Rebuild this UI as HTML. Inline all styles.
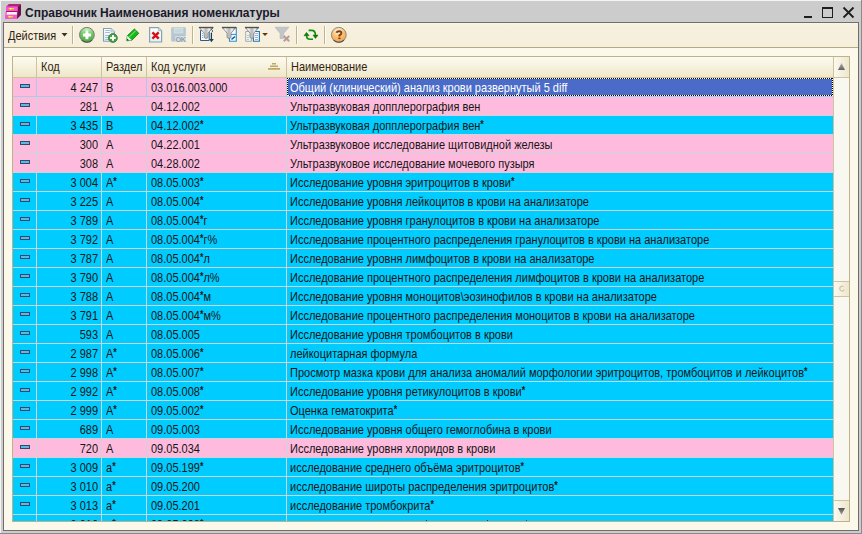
<!DOCTYPE html>
<html><head><meta charset="utf-8">
<style>
html,body{margin:0;padding:0;width:862px;height:534px;overflow:hidden;position:relative;background:#cccccc;font-family:"Liberation Sans",sans-serif;font-size:11px;color:#000}
.a{position:absolute}
#title{left:25px;top:6px;font-size:12px;font-weight:bold;color:#1a1a2a;line-height:15px;white-space:nowrap}
#frame{left:3px;top:22px;width:854px;height:507px;border:1px solid #6e6e6e;background:#fdf9ea}
#tb{left:4px;top:23px;width:854px;height:24px;background:linear-gradient(#fbf6e6 0,#f7f0de 2px,#f6efdc);border-bottom:1px solid #b4a982}
#tbl{left:12px;top:56px;width:836px;height:464px;border:1px solid #bdb28c;background:#cdd3d6;overflow:hidden}
#hdr{left:0;top:0;width:820px;height:20px;background:linear-gradient(#fdfbf1,#efe7c9)}
.hl{position:absolute;top:0;height:20px;width:1px;background:#cdc3a0}
.ht{position:absolute;top:0;line-height:20px;white-space:nowrap;color:#302410;font-size:11px;transform:scaleY(1.13);transform-origin:0 14px}
.r{position:absolute;left:0;width:820px;height:18px}
.r span{position:absolute;top:1px;line-height:18px;white-space:nowrap;font-size:11px;color:#161616;transform:scaleY(1.13);transform-origin:0 12px}
.r .k{right:735px;text-align:right}
.r .z{left:93px}
.r .u{left:138px}
.r .n{left:277px}
.r .sel{position:absolute;left:274px;top:0;width:546px;height:18px;background:#4a6cc8;overflow:hidden}
.r .sel span{left:3px;color:#fff}
.mi{position:absolute;left:7px;top:6px;width:8px;height:2px;border:1px solid #2b4a6c;background:#5cb8e2}
.vl{position:absolute;top:21px;width:1px;height:450px;background:#cdd3d6}
.dh{height:1px;background:repeating-linear-gradient(90deg,#000 0 1px,#fff 1px 2px)}
.dv{width:1px;background:repeating-linear-gradient(180deg,#000 0 1px,#fff 1px 2px)}
.as{font-weight:bold;font-size:9px;letter-spacing:0;position:relative;top:-2px;margin-left:0}
#sb{left:820px;top:0;width:15px;height:464px;background:#f8f7f0;border-left:1px solid #cdc3a0}
</style></head><body>
<div class="a" style="left:0;top:0;width:862px;height:1px;background:#f4f4f4"></div>
<div class="a" style="left:0;top:0;width:1px;height:534px;background:#f4f4f4"></div>
<div class="a" style="left:861px;top:0;width:1px;height:534px;background:#8a8a8a"></div>
<div class="a" style="left:0;top:533px;width:862px;height:1px;background:#8a8a8a"></div>

<!-- title icon -->
<svg class="a" style="left:0;top:0" width="24" height="22" viewBox="0 0 24 22">
  <polygon points="9,4 21,4 17.5,6.8 6,6.8" fill="#b3217e"/>
  <polygon points="17.5,6.8 21,4 21,15 17,19" fill="#6e0f4e"/>
  <rect x="6" y="6.8" width="11.5" height="4.4" fill="#ff4fd2"/>
  <rect x="6" y="11" width="11.5" height="1" fill="#9a1a6a"/>
  <polygon points="5,12 7,12 7,14.7 5,14.7" fill="#ff7ad8"/>
  <rect x="7" y="12" width="9.5" height="2.7" fill="#f4f8f2"/>
  <rect x="5" y="14.7" width="12" height="4.3" fill="#ff4fd2"/>
  <rect x="8.7" y="8" width="5.3" height="1.4" fill="#ecdc00"/>
  <rect x="8" y="15.9" width="5" height="1.5" fill="#ecdc00"/>
  <rect x="10" y="8" width="1.2" height="1.4" fill="#fff8c0"/>
  <rect x="9.3" y="15.9" width="1.2" height="1.5" fill="#fff8c0"/>
</svg>
<div id="title" class="a">Справочник Наименования номенклатуры</div>
<!-- window buttons -->
<div class="a" style="left:804px;top:16px;width:8px;height:2px;background:#1e1e1e"></div>
<div class="a" style="left:822px;top:7px;width:9px;height:8px;border:1px solid #1e1e1e;border-top-width:2px"></div>
<svg class="a" style="left:842px;top:6px" width="13" height="13" viewBox="0 0 13 13"><path d="M1.5 1.5L11.5 11.5M11.5 1.5L1.5 11.5" stroke="#1e1e1e" stroke-width="1.8"/></svg>

<div id="frame" class="a"></div>
<div id="tb" class="a"></div>
<div class="a" style="left:8px;top:28px;line-height:16px;color:#302410;font-size:11px;transform:scaleY(1.13);transform-origin:0 12px">Действия</div>
<svg class="a" style="left:61px;top:33px" width="7" height="4"><polygon points="0.5,0 6.5,0 3.5,3.5" fill="#3a3020"/></svg>
<div class="a" style="left:72px;top:26px;width:1px;height:18px;background:#bfb38c"></div><div class="a" style="left:73px;top:26px;width:1px;height:18px;background:#fffdf6"></div>
<div class="a" style="left:192px;top:26px;width:1px;height:18px;background:#bfb38c"></div><div class="a" style="left:193px;top:26px;width:1px;height:18px;background:#fffdf6"></div>
<div class="a" style="left:296px;top:26px;width:1px;height:18px;background:#bfb38c"></div><div class="a" style="left:297px;top:26px;width:1px;height:18px;background:#fffdf6"></div>
<div class="a" style="left:324px;top:26px;width:1px;height:18px;background:#bfb38c"></div><div class="a" style="left:325px;top:26px;width:1px;height:18px;background:#fffdf6"></div>

<!-- toolbar icons -->
<svg class="a" style="left:0;top:0;overflow:visible" width="862" height="50" viewBox="0 0 862 50">
  <defs>
    <radialGradient id="g1" cx="0.5" cy="0.2" r="0.8"><stop offset="0" stop-color="#d4f2cc"/><stop offset="0.5" stop-color="#78cc6e"/><stop offset="1" stop-color="#44a63c"/></radialGradient>
    <radialGradient id="g1b" cx="0.5" cy="0.5" r="0.5"><stop offset="0" stop-color="#0a8a1a"/><stop offset="1" stop-color="#58b850"/></radialGradient>
    <radialGradient id="g2" cx="0.45" cy="0.25" r="0.8"><stop offset="0" stop-color="#fff4e4"/><stop offset="0.5" stop-color="#fcc070"/><stop offset="1" stop-color="#f4a040"/></radialGradient>
    <linearGradient id="fg" x1="0" x2="1"><stop offset="0" stop-color="#8a8a8a"/><stop offset="0.2" stop-color="#fafafa"/><stop offset="0.5" stop-color="#b4b4b4"/><stop offset="0.72" stop-color="#f4f4f4"/><stop offset="1" stop-color="#6a6a6a"/></linearGradient>
    <linearGradient id="pg" x1="0" y1="0" x2="0" y2="1"><stop offset="0" stop-color="#ffffff"/><stop offset="1" stop-color="#dff0f8"/></linearGradient>
  </defs>
  <!-- add -->
  <circle cx="86.9" cy="34.8" r="7.4" fill="url(#g1)" stroke="#7a8478" stroke-width="1"/>
  <path d="M81.67 40.03A7.4 7.4 0 0 0 92.13 40.03" stroke="#4a524a" stroke-width="1.1" fill="none"/>
  <path d="M83 35H91M87 31V39.2" stroke="#2a9a30" stroke-width="4.4" opacity="0.55"/>
  <rect x="83" y="33.4" width="8" height="3.2" fill="#fff"/><rect x="85.4" y="31" width="3.1" height="8.2" fill="#fff"/>
  <!-- copy -->
  <path d="M103.5 28.5H111L114.5 32V41.3H103.5Z" fill="url(#pg)" stroke="#7ca2bc" stroke-width="1.1"/>
  <path d="M111 28.5V32H114.5" fill="#d8e8f0" stroke="#9ab8cc" stroke-width="0.8"/>
  <path d="M105.2 30.5H110M105.2 32.5H110M105.2 35.5H109M105.2 37.5H109M105.2 39.5H109" stroke="#a6b2bc" stroke-width="0.9"/>
  <circle cx="112.9" cy="38" r="4.4" fill="#38a838" stroke="#4a7050" stroke-width="0.9"/>
  <rect x="110.1" y="36.9" width="5.6" height="2.1" fill="#fff"/><rect x="112" y="35.1" width="2" height="5.6" fill="#fff"/>
  <!-- edit pencil -->
  <path d="M134.4 29L138.8 33.3L131.8 40.3L126.8 40.8L127.3 35.8Z" fill="#18b818" stroke="#0a7010" stroke-width="0.8"/>
  <path d="M135.8 30.6L129 37.4" stroke="#90f090" stroke-width="1"/>
  <path d="M127.3 35.8L131.8 40.3L126.8 40.8Z" fill="#f4fff4"/>
  <path d="M126.8 40.8L127.1 38.3L129.3 40.5Z" fill="#0a6a10"/>
  <!-- delete -->
  <path d="M149.6 27.6H158.4L161.6 30.8V42H149.6Z" fill="url(#pg)" stroke="#82a2b6" stroke-width="1.2"/>
  <path d="M158.4 27.6V30.8H161.6" fill="#d0e0ea" stroke="#9ab4c4" stroke-width="0.8"/>
  <path d="M152.4 32.3L158.7 38.6M158.7 32.3L152.4 38.6" stroke="#d81010" stroke-width="2.4"/>
  <!-- save disabled -->
  <rect x="171.2" y="27.2" width="14.6" height="14.4" rx="0.8" fill="#b4c6d2"/>
  <rect x="174.2" y="28.4" width="8.6" height="4.6" fill="#c4dade" stroke="#dadedd" stroke-width="1"/>
  <rect x="175.2" y="36" width="10.8" height="5.8" fill="#dcdedc"/>
  <text x="175.6" y="41.6" font-size="7.2" font-family="Liberation Sans" font-weight="bold" fill="#8aa2b2" letter-spacing="-0.4">OK</text>
  <!-- funnel1 -->
  <path d="M200.5 30.5H209.2V40.5H200.5Z" fill="#f4faff" stroke="#2c5a84" stroke-width="1"/>
  <path d="M202 33.5H203M202 35.5H203M202 37.5H203" stroke="#8aa8c0" stroke-width="0.9"/>
  <path d="M199 27.2H213.2L208 33.2V37.5Q206 39.5 204.2 37.5V33.2Z" fill="url(#fg)" stroke="#6e6e6e" stroke-width="0.7"/><path d="M199 27.6H213.2" stroke="#505050" stroke-width="1.2"/>
  <path d="M212.8 28L211.6 29.6L212.8 31L211.6 32.6" stroke="#2a5a70" stroke-width="0.9" fill="none"/>
  <path d="M211.4 33V39.5" stroke="#14405a" stroke-width="1.3"/>
  <path d="M209.2 39H213.8L211.4 42.3Z" fill="#14405a"/>
  <!-- funnel2 -->
  <path d="M229.5 27.5H236.3V41.3H229.5Z" fill="#f8fcff" stroke="#2a90cc" stroke-width="1.1"/>
  <path d="M230 34.4H236" stroke="#2a90cc" stroke-width="1"/>
  <path d="M222 27.2H236.1L231 33.2V37.5Q229 39.5 227.1 37.5V33.2Z" fill="url(#fg)" stroke="#6e6e6e" stroke-width="0.7"/><path d="M222 27.6H236.1" stroke="#505050" stroke-width="1.2"/>
  <path d="M231.5 39.5L233 38.2L235 36.6" stroke="#1064a8" stroke-width="1.5" fill="none"/>
  <!-- funnel3 -->
  <path d="M245.7 31.5H251.4V41.3H245.7Z" fill="#eef6f4" stroke="#a4acac" stroke-width="1"/>
  <path d="M253.4 31.5H259.4V41.3H253.4Z" fill="#f4faff" stroke="#1a78b8" stroke-width="1.1"/>
  <path d="M247 35.5H249M247 37.5H249M247 39.5H249" stroke="#b8b8a8" stroke-width="0.8"/>
  <path d="M255 33.5H258M255 35.5H258M255 37.5H258M255 39.5H258" stroke="#8aa0c8" stroke-width="0.8"/>
  <path d="M245 27.2H258.9L253.8 33.2V37.5Q251.9 39.5 250 37.5V33.2Z" fill="url(#fg)" stroke="#6e6e6e" stroke-width="0.7"/><path d="M245 27.6H258.9" stroke="#505050" stroke-width="1.2"/>
  <path d="M262.2 33H267.9L265 36Z" fill="#5a3a08"/>
  <!-- funnel4 disabled -->
  <path d="M275 27.2H288.9L283.7 33.2V38.5H280.1V33.2Z" fill="#c2c6ca" stroke="#b4b8bc" stroke-width="0.7"/>
  <path d="M283.8 36L289.2 41.2M289.2 36L283.8 41.2" stroke="#b89a9a" stroke-width="2"/>
  <!-- refresh -->
  <path d="M306.6 35.4Q306.6 39.2 310 39.2H313" stroke="#109010" stroke-width="1.6" fill="none"/>
  <path d="M308.6 30.4H311.6Q315.4 30.4 315.4 35" stroke="#109010" stroke-width="1.6" fill="none"/>
  <path d="M304 35.7L306.5 32.4L309.1 35.7Z" fill="#0a780a" stroke="#0a780a" stroke-width="0.6"/>
  <path d="M313 35.1H318L315.5 38.4Z" fill="#0a780a" stroke="#0a780a" stroke-width="0.6"/>
  <!-- help -->
  <circle cx="338.8" cy="34.8" r="7.4" fill="url(#g2)" stroke="#8a8a86" stroke-width="1"/>
  <path d="M333.57 40.03A7.4 7.4 0 0 0 344.03 40.03" stroke="#4e4e4e" stroke-width="1.1" fill="none"/>
  <path d="M336.5 32.8Q337 31.2 339 31.2Q341.6 31.2 341.4 33.2Q341.2 34.6 339.4 35.4V36.6" stroke="#7a3e12" stroke-width="1.9" fill="none"/>
  <rect x="338.3" y="37.6" width="2.2" height="1.5" fill="#7a3e12"/>
</svg>
<!-- table -->
<div id="tbl" class="a">
  <div id="hdr" class="a"></div>
  <div class="hl" style="left:23px"></div>
  <div class="hl" style="left:88px"></div>
  <div class="hl" style="left:133px"></div>
  <div class="hl" style="left:273px"></div>
  <div class="a" style="left:0;top:20px;width:820px;height:1px;background:#cfc39a"></div>
  <div class="ht" style="left:28px">Код</div>
  <div class="ht" style="left:93px">Раздел</div>
  <div class="ht" style="left:138px">Код услуги</div>
  <div class="ht" style="left:278px">Наименование</div>
  <svg class="a" style="left:255px;top:6px" width="13" height="8" viewBox="0 0 13 8"><path d="M4 0.8H8M2 3.3H10M0 5.9H12" stroke="#bda864" stroke-width="1.6"/></svg>
<div class="r" style="top:21px;background:#ffbbdd">
<i class="mi"></i>
<span class="k">4 247</span>
<span class="z">B</span>
<span class="u">03.016.003.000</span>
<div class="sel"><span>Общий (клинический) анализ крови развернутый 5 diff</span></div>
</div>
<div class="r" style="top:40px;background:#ffbbdd">
<i class="mi"></i>
<span class="k">281</span>
<span class="z">A</span>
<span class="u">04.12.002</span>
<span class="n">Ультразвуковая допплерография вен</span>
</div>
<div class="r" style="top:59px;background:#00ccff">
<i class="mi"></i>
<span class="k">3 435</span>
<span class="z">B</span>
<span class="u">04.12.002<b class="as">*</b></span>
<span class="n">Ультразвуковая допплерография вен<b class="as">*</b></span>
</div>
<div class="r" style="top:78px;background:#ffbbdd">
<i class="mi"></i>
<span class="k">300</span>
<span class="z">A</span>
<span class="u">04.22.001</span>
<span class="n">Ультразвуковое исследование щитовидной железы</span>
</div>
<div class="r" style="top:97px;background:#ffbbdd">
<i class="mi"></i>
<span class="k">308</span>
<span class="z">A</span>
<span class="u">04.28.002</span>
<span class="n">Ультразвуковое исследование мочевого пузыря</span>
</div>
<div class="r" style="top:116px;background:#00ccff">
<i class="mi"></i>
<span class="k">3 004</span>
<span class="z">A<b class="as">*</b></span>
<span class="u">08.05.003<b class="as">*</b></span>
<span class="n">Исследование уровня эритроцитов в крови<b class="as">*</b></span>
</div>
<div class="r" style="top:135px;background:#00ccff">
<i class="mi"></i>
<span class="k">3 225</span>
<span class="z">A</span>
<span class="u">08.05.004<b class="as">*</b></span>
<span class="n">Исследование уровня лейкоцитов в крови на анализаторе</span>
</div>
<div class="r" style="top:154px;background:#00ccff">
<i class="mi"></i>
<span class="k">3 789</span>
<span class="z">A</span>
<span class="u">08.05.004<b class="as">*</b>г</span>
<span class="n">Исследование уровня гранулоцитов в крови на анализаторе</span>
</div>
<div class="r" style="top:173px;background:#00ccff">
<i class="mi"></i>
<span class="k">3 792</span>
<span class="z">A</span>
<span class="u">08.05.004<b class="as">*</b>г%</span>
<span class="n">Исследование процентного распределения гранулоцитов в крови на анализаторе</span>
</div>
<div class="r" style="top:192px;background:#00ccff">
<i class="mi"></i>
<span class="k">3 787</span>
<span class="z">A</span>
<span class="u">08.05.004<b class="as">*</b>л</span>
<span class="n">Исследование уровня лимфоцитов в крови на анализаторе</span>
</div>
<div class="r" style="top:211px;background:#00ccff">
<i class="mi"></i>
<span class="k">3 790</span>
<span class="z">A</span>
<span class="u">08.05.004<b class="as">*</b>л%</span>
<span class="n">Исследование процентного распределения лимфоцитов в крови на анализаторе</span>
</div>
<div class="r" style="top:230px;background:#00ccff">
<i class="mi"></i>
<span class="k">3 788</span>
<span class="z">A</span>
<span class="u">08.05.004<b class="as">*</b>м</span>
<span class="n">Исследование уровня моноцитов\эозинофилов в крови на анализаторе</span>
</div>
<div class="r" style="top:249px;background:#00ccff">
<i class="mi"></i>
<span class="k">3 791</span>
<span class="z">A</span>
<span class="u">08.05.004<b class="as">*</b>м%</span>
<span class="n">Исследование процентного распределения моноцитов в крови на анализаторе</span>
</div>
<div class="r" style="top:268px;background:#00ccff">
<i class="mi"></i>
<span class="k">593</span>
<span class="z">A</span>
<span class="u">08.05.005</span>
<span class="n">Исследование уровня тромбоцитов в крови</span>
</div>
<div class="r" style="top:287px;background:#00ccff">
<i class="mi"></i>
<span class="k">2 987</span>
<span class="z">A<b class="as">*</b></span>
<span class="u">08.05.006<b class="as">*</b></span>
<span class="n">лейкоцитарная формула</span>
</div>
<div class="r" style="top:306px;background:#00ccff">
<i class="mi"></i>
<span class="k">2 998</span>
<span class="z">A<b class="as">*</b></span>
<span class="u">08.05.007<b class="as">*</b></span>
<span class="n">Просмотр мазка крови для анализа аномалий морфологии эритроцитов, тромбоцитов и лейкоцитов<b class="as">*</b></span>
</div>
<div class="r" style="top:325px;background:#00ccff">
<i class="mi"></i>
<span class="k">2 992</span>
<span class="z">A<b class="as">*</b></span>
<span class="u">08.05.008<b class="as">*</b></span>
<span class="n">Исследование уровня ретикулоцитов в крови<b class="as">*</b></span>
</div>
<div class="r" style="top:344px;background:#00ccff">
<i class="mi"></i>
<span class="k">2 999</span>
<span class="z">A<b class="as">*</b></span>
<span class="u">09.05.002<b class="as">*</b></span>
<span class="n">Оценка гематокрита<b class="as">*</b></span>
</div>
<div class="r" style="top:363px;background:#00ccff">
<i class="mi"></i>
<span class="k">689</span>
<span class="z">A</span>
<span class="u">09.05.003</span>
<span class="n">Исследование уровня общего гемоглобина в крови</span>
</div>
<div class="r" style="top:382px;background:#ffbbdd">
<i class="mi"></i>
<span class="k">720</span>
<span class="z">A</span>
<span class="u">09.05.034</span>
<span class="n">Исследование уровня хлоридов в крови</span>
</div>
<div class="r" style="top:401px;background:#00ccff">
<i class="mi"></i>
<span class="k">3 009</span>
<span class="z">a<b class="as">*</b></span>
<span class="u">09.05.199<b class="as">*</b></span>
<span class="n">исследование среднего объёма эритроцитов<b class="as">*</b></span>
</div>
<div class="r" style="top:420px;background:#00ccff">
<i class="mi"></i>
<span class="k">3 010</span>
<span class="z">a<b class="as">*</b></span>
<span class="u">09.05.200</span>
<span class="n">исследование широты распределения эритроцитов<b class="as">*</b></span>
</div>
<div class="r" style="top:439px;background:#00ccff">
<i class="mi"></i>
<span class="k">3 013</span>
<span class="z">a<b class="as">*</b></span>
<span class="u">09.05.201</span>
<span class="n">исследование тромбокрита<b class="as">*</b></span>
</div>
<div class="r" style="top:458px;background:#00ccff">
<i class="mi"></i>
<span class="k">3 016</span>
<span class="z">a<b class="as">*</b></span>
<span class="u">09.05.202<b class="as">*</b></span>
<span class="n"></span>
</div>
  <div class="a" style="left:413px;top:463px;width:1px;height:1px;background:#1a2a50"></div>
  <div class="a" style="left:474px;top:463px;width:1px;height:1px;background:#1a2a50"></div>
  <div class="a" style="left:513px;top:463px;width:1px;height:1px;background:#2a5a50"></div>
  <div class="vl" style="left:23px"></div>
  <div class="vl" style="left:88px"></div>
  <div class="vl" style="left:133px"></div>
  <div class="vl" style="left:273px"></div>
  <div class="a" style="left:0;top:39px;width:820px;height:1px;background:#aacbe8"></div>
  <div class="a" style="left:23px;top:21px;width:1px;height:18px;background:#aacbe8"></div>
  <div class="a" style="left:88px;top:21px;width:1px;height:18px;background:#aacbe8"></div>
  <div class="a" style="left:133px;top:21px;width:1px;height:18px;background:#aacbe8"></div>
  <div class="a" style="left:273px;top:21px;width:1px;height:18px;background:#aacbe8"></div>
  <div class="a dh" style="left:274px;top:21px;width:546px"></div>
  <div class="a dh" style="left:274px;top:38px;width:546px"></div>
  <div class="a dv" style="left:274px;top:21px;height:18px"></div>
  <div class="a dv" style="left:819px;top:21px;height:18px"></div>
  <div id="sb" class="a">
    <div class="a" style="left:0;top:0;width:15px;height:20px;background:linear-gradient(90deg,#fbf9ef,#eee6cc);border-bottom:1px solid #cdc3a0"></div>
    <svg class="a" style="left:4px;top:6px" width="8" height="8"><defs><linearGradient id="tg" x1="0" y1="0" x2="0" y2="1"><stop offset="0" stop-color="#b0b0b0"/><stop offset="1" stop-color="#606060"/></linearGradient></defs><polygon points="3.5,0 7,7 0,7" fill="url(#tg)"/></svg>
    <div class="a" style="left:0;top:224px;width:15px;height:14px;background:linear-gradient(90deg,#fbf9ef,#eee6cc);border-top:1px solid #cdc3a0;border-bottom:1px solid #cdc3a0"></div>
    <div class="a" style="left:0;top:443px;width:15px;height:21px;background:linear-gradient(90deg,#fbf9ef,#eee6cc);border-top:1px solid #cdc3a0"></div>
    <svg class="a" style="left:4px;top:451px" width="8" height="8"><polygon points="0,0 7,0 3.5,7" fill="url(#tg2)"/><defs><linearGradient id="tg2" x1="0" y1="0" x2="0" y2="1"><stop offset="0" stop-color="#505050"/><stop offset="1" stop-color="#a8a8a8"/></linearGradient></defs></svg>
    <svg class="a" style="left:4px;top:228px" width="8" height="8"><path d="M5.5 1.6A2.4 2.4 0 1 0 6.4 4.6" stroke="#cfc6a8" stroke-width="1.3" fill="none"/></svg>
  </div>
</div>
</body></html>
